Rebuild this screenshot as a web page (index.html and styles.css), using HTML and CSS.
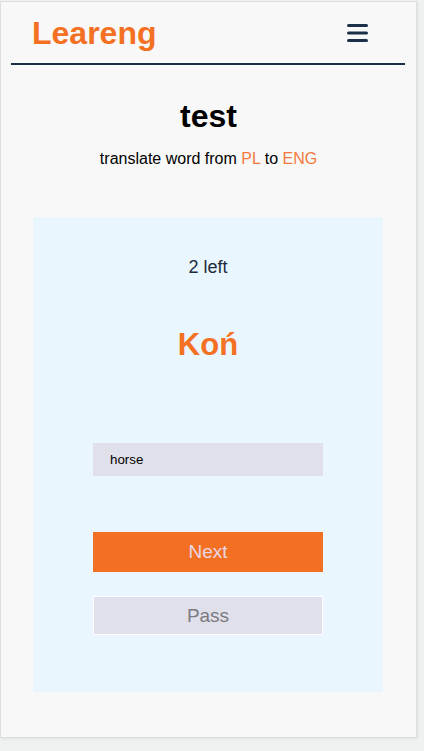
FILE: index.html
```html
<!DOCTYPE html>
<html lang="en">
<head>
<meta charset="utf-8">
<title>Leareng</title>
<link rel="stylesheet" href="styles.css">
</head>
<body>
<div class="frame">
  <header class="header">
    <div class="logo">Leareng</div>
    <button class="menu" aria-label="menu">
      <svg width="21" height="18" viewBox="0 0 21 18">
        <rect x="0" y="0" width="21" height="3" rx="1.5" fill="#1b3048"/>
        <rect x="0" y="7.5" width="21" height="3" rx="1.5" fill="#1b3048"/>
        <rect x="0" y="15" width="21" height="3" rx="1.5" fill="#1b3048"/>
      </svg>
    </button>
  </header>
  <main class="main">
    <h1 class="title">test</h1>
    <p class="subtitle">translate word from <span class="accent">PL</span> to <span class="accent">ENG</span></p>
    <section class="card">
      <div class="left">2 left</div>
      <div class="word">Koń</div>
      <input class="answer" type="text" value="horse">
      <button class="btn next">Next</button>
      <button class="btn pass">Pass</button>
    </section>
  </main>
</div>
</body>
</html>
```

FILE: styles.css
```css
html, body {
  margin: 0;
  padding: 0;
}
body {
  background: #eff0f0;
  font-family: "Liberation Sans", Arial, sans-serif;
  width: 424px;
  height: 751px;
  overflow: hidden;
}
.frame {
  box-sizing: border-box;
  width: 417px;
  height: 737px;
  margin-top: 1px;
  background: #f8f8f8;
  border: 1px solid #dedede;
  box-shadow: 1px 1px 2px rgba(0, 0, 0, 0.06);
  display: flex;
  flex-direction: column;
}
.header {
  box-sizing: border-box;
  height: 63px;
  margin: 0 11px 0 10px;
  padding: 0 37px 0 21px;
  border-bottom: 2px solid #1b3048;
  display: flex;
  align-items: center;
  justify-content: space-between;
}
.logo {
  color: #f47023;
  font-size: 32px;
  font-weight: bold;
  line-height: 37px;
  margin-top: 2px;
}
.menu {
  border: 0;
  padding: 0;
  background: none;
  width: 21px;
  height: 18px;
  display: block;
}
.menu svg {
  display: block;
}
.main {
  display: flex;
  flex-direction: column;
  align-items: center;
  text-align: center;
}
.title {
  margin: 33px 0 0;
  font-size: 32px;
  line-height: 37px;
  font-weight: bold;
  color: #000;
}
.subtitle {
  margin: 15px 0 0;
  font-size: 16px;
  line-height: 18px;
  color: #000;
}
.accent {
  color: #f47a3c;
}
.card {
  box-sizing: border-box;
  width: 350px;
  margin: 49px 1px 0 0;
  padding: 40px 0 57px;
  background: #eaf6fe;
  display: flex;
  flex-direction: column;
  align-items: center;
}
.left {
  font-size: 18px;
  line-height: 21px;
  color: #1c2a3a;
}
.word {
  margin-top: 48px;
  font-size: 31px;
  line-height: 37px;
  font-weight: bold;
  color: #f47023;
}
.answer {
  box-sizing: border-box;
  margin-top: 80px;
  width: 230px;
  height: 33px;
  border: 0;
  padding: 0 0 0 17px;
  background: #e0e0ea;
  font-family: "Liberation Sans", Arial, sans-serif;
  font-size: 13.33px;
  color: #000;
  outline: none;
}
.btn {
  box-sizing: border-box;
  width: 230px;
  font-family: "Liberation Sans", Arial, sans-serif;
  font-size: 19px;
  padding: 0;
  cursor: pointer;
}
.next {
  margin-top: 56px;
  height: 40px;
  border: 0;
  background: #f37023;
  color: #e8d6e4;
}
.pass {
  margin-top: 24px;
  height: 39px;
  border: 1px solid #ffffff;
  background: #e0e0ea;
  color: #7a7a80;
}
```
